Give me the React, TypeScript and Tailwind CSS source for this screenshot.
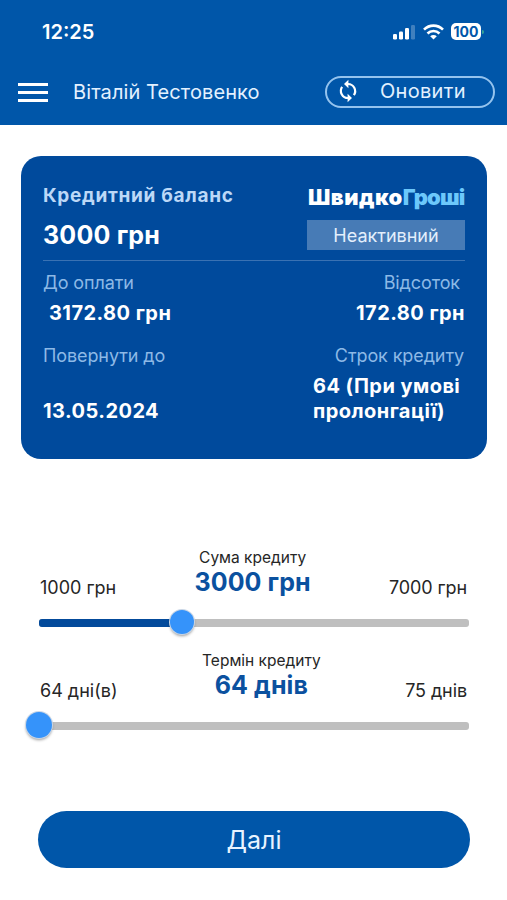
import React from 'react'

interface SliderProps {
    title: string
    value: string
    min: string
    max: string
    percent: number
    thumbClass: string
}

const StatusIcons: React.FC = () => (
    <div className="flex items-center">
        <svg width="23" height="16" viewBox="0 0 23 16" fill="#fff">
            <rect x="0" y="10" width="4" height="5.5" rx="1.2" />
            <rect x="6" y="7.5" width="4" height="8" rx="1.2" />
            <rect x="12" y="4" width="4" height="11.5" rx="1.2" />
            <rect x="18" y="1" width="4" height="14.5" rx="1.2" opacity="0.25" />
        </svg>
        <svg className="ml-[7px]" width="21" height="16" viewBox="0 0 21 16" fill="none" stroke="#fff" strokeWidth="2.7">
            <path d="M1 5.6C6.4 .4 14.6 .4 20 5.6" />
            <path d="M4.5 9.4c3.4-3.2 8.6-3.2 12 0" />
            <path d="M10.5 15.6l-3.3-3.3c1.9-1.8 4.7-1.8 6.6 0z" fill="#fff" stroke="none" />
        </svg>
        <div className="ml-[7px] flex h-[17px] w-[30px] items-center justify-center rounded-[5px] bg-white text-[14px] leading-none font-bold text-[#0056a9]">
            100
        </div>
        <div className="ml-[1px] h-[4px] w-[2px] rounded-r-full bg-[#35a596]" />
    </div>
)

const RefreshIcon: React.FC = () => (
    <svg width="24" height="24" viewBox="0 0 24 24" fill="none" stroke="#fff" strokeWidth="2.2">
        <path d="M11.5 5H12a7.2 7.2 0 0 1 5.9 11.2" />
        <path d="M12.5 19H12A7.2 7.2 0 0 1 6.1 7.8" />
        <path d="M12.4 .8v8.4L8 5zM11.6 23.2v-8.4L16 19z" fill="#fff" stroke="none" />
    </svg>
)

const Slider: React.FC<SliderProps> = ({ title, value, min, max, percent, thumbClass }) => (
    <div className="h-[103px]">
        <div className="flex h-[56px] justify-between pr-[2px] pl-px text-[18px] text-[#262626]">
            <span className="pt-[29px] leading-[24px]">{min}</span>
            <div className="flex flex-col items-center pt-px">
                <span className="text-[15.5px] leading-[20px]">{title}</span>
                <span className="text-[25px] leading-[28px] font-bold tracking-[0.1px] text-[#0b519f]">{value}</span>
            </div>
            <span className="pt-[29px] leading-[24px] tracking-[-0.1px]">{max}</span>
        </div>
        <div className="relative mt-[16px] h-[8px] rounded-[3px] bg-[#bfbfbf]">
            <div className="h-full rounded-l-[3px] bg-[#034a9b]" style={{ width: `${percent}%` }} />
            <div
                className={`absolute top-[3px] -translate-x-1/2 -translate-y-1/2 rounded-full bg-[#3593fa] shadow-[0_2px_3px_rgba(0,0,0,0.4)] ring-1 ring-[#c9d6e6] ${thumbClass}`}
                style={{ left: `${percent}%` }}
            />
        </div>
    </div>
)

const App: React.FC = () => {
    return (
        <div className="h-[900px] w-[507px] overflow-hidden bg-white font-['Inter',sans-serif]">
            <header className="h-[125px] bg-[#0056a9] text-white">
                <div className="flex h-[63px] items-center justify-between pr-[23px] pl-[42px]">
                    <span className="text-[20px] font-semibold">12:25</span>
                    <StatusIcons />
                </div>
                <div className="flex h-[57px] items-center pr-[12px] pl-[18px]">
                    <button className="flex w-[30px] flex-col gap-[5px] pt-px">
                        <span className="h-[3px] bg-white" />
                        <span className="h-[3px] bg-white" />
                        <span className="h-[3px] bg-white" />
                    </button>
                    <span className="ml-[25px] text-[20px] tracking-[0.1px] text-[#e3f1ff]">Віталій Тестовенко</span>
                    <button className="ml-auto flex h-[32px] w-[170px] items-center rounded-full border-2 border-[#94c3ee] pb-px pl-[9px] text-[20px] text-[#e3f1ff]">
                        <RefreshIcon />
                        <span className="ml-[20px] tracking-[0.3px]">Оновити</span>
                    </button>
                </div>
            </header>

            <section className="mt-[31px] ml-[21px] h-[303px] w-[466px] rounded-[20px] bg-[#004a9c] px-[22px] pt-[25px] text-[20px] font-bold tracking-[0.45px] text-white">
                <div className="flex h-[80px] justify-between border-b border-[#3a72b3]">
                    <div>
                        <div className="pt-px text-[19px] leading-[28px] tracking-[0.7px] text-[#bcd8f7]">Кредитний баланс</div>
                        <div className="mt-[9px] text-[25px] leading-[33px] tracking-[0.2px]">3000 грн</div>
                    </div>
                    <div className="w-[158px]">
                        <div className="h-[30px] pl-px text-[22px] leading-[32px] font-black tracking-[0.5px] whitespace-nowrap">
                            Швидко<span className="tracking-[-0.8px] text-[#6cc8fb]">Гроші</span>
                        </div>
                        <div className="mt-[9px] flex h-[30px] items-center justify-center bg-[#477bb6] text-[18px] font-normal tracking-normal text-[#e3effc]">
                            Неактивний
                        </div>
                    </div>
                </div>
                <div className="mt-[10px] flex justify-between text-[18px] leading-[24px] font-normal tracking-[-0.1px] text-[#8db9e6]">
                    <span>До оплати</span>
                    <span className="pr-[5px]">Відсоток</span>
                </div>
                <div className="mt-[5px] flex justify-between leading-[26px]">
                    <span className="pl-[6px]">3172.80 грн</span>
                    <span>172.80 грн</span>
                </div>
                <div className="mt-[18px] flex justify-between text-[18px] leading-[24px] font-normal tracking-[-0.1px] text-[#8db9e6]">
                    <span>Повернути до</span>
                    <span className="pr-px">Строк кредиту</span>
                </div>
                <div className="mt-[6px] flex items-end justify-between leading-[25px]">
                    <span>13.05.2024</span>
                    <span className="w-[152px] whitespace-nowrap">
                        64 (При умові
                        <br />
                        пролонгації)
                    </span>
                </div>
            </section>

            <section className="mt-[88px] ml-[39px] w-[430px]">
                <Slider title="Сума кредиту" value="3000 грн" min="1000 грн" max="7000 грн" percent={33.3} thumbClass="size-[24px]" />
                <Slider title="Термін кредиту" value="64 днів" min="64 дні(в)" max="75 днів" percent={0} thumbClass="size-[26px]" />
            </section>

            <button className="mt-[58px] ml-[38px] flex h-[57px] w-[432px] items-center justify-center rounded-full bg-[#0056a9] pt-[3px] text-[25px] text-[#e8f3ff]">
                Далі
            </button>
        </div>
    )
}

export default App
